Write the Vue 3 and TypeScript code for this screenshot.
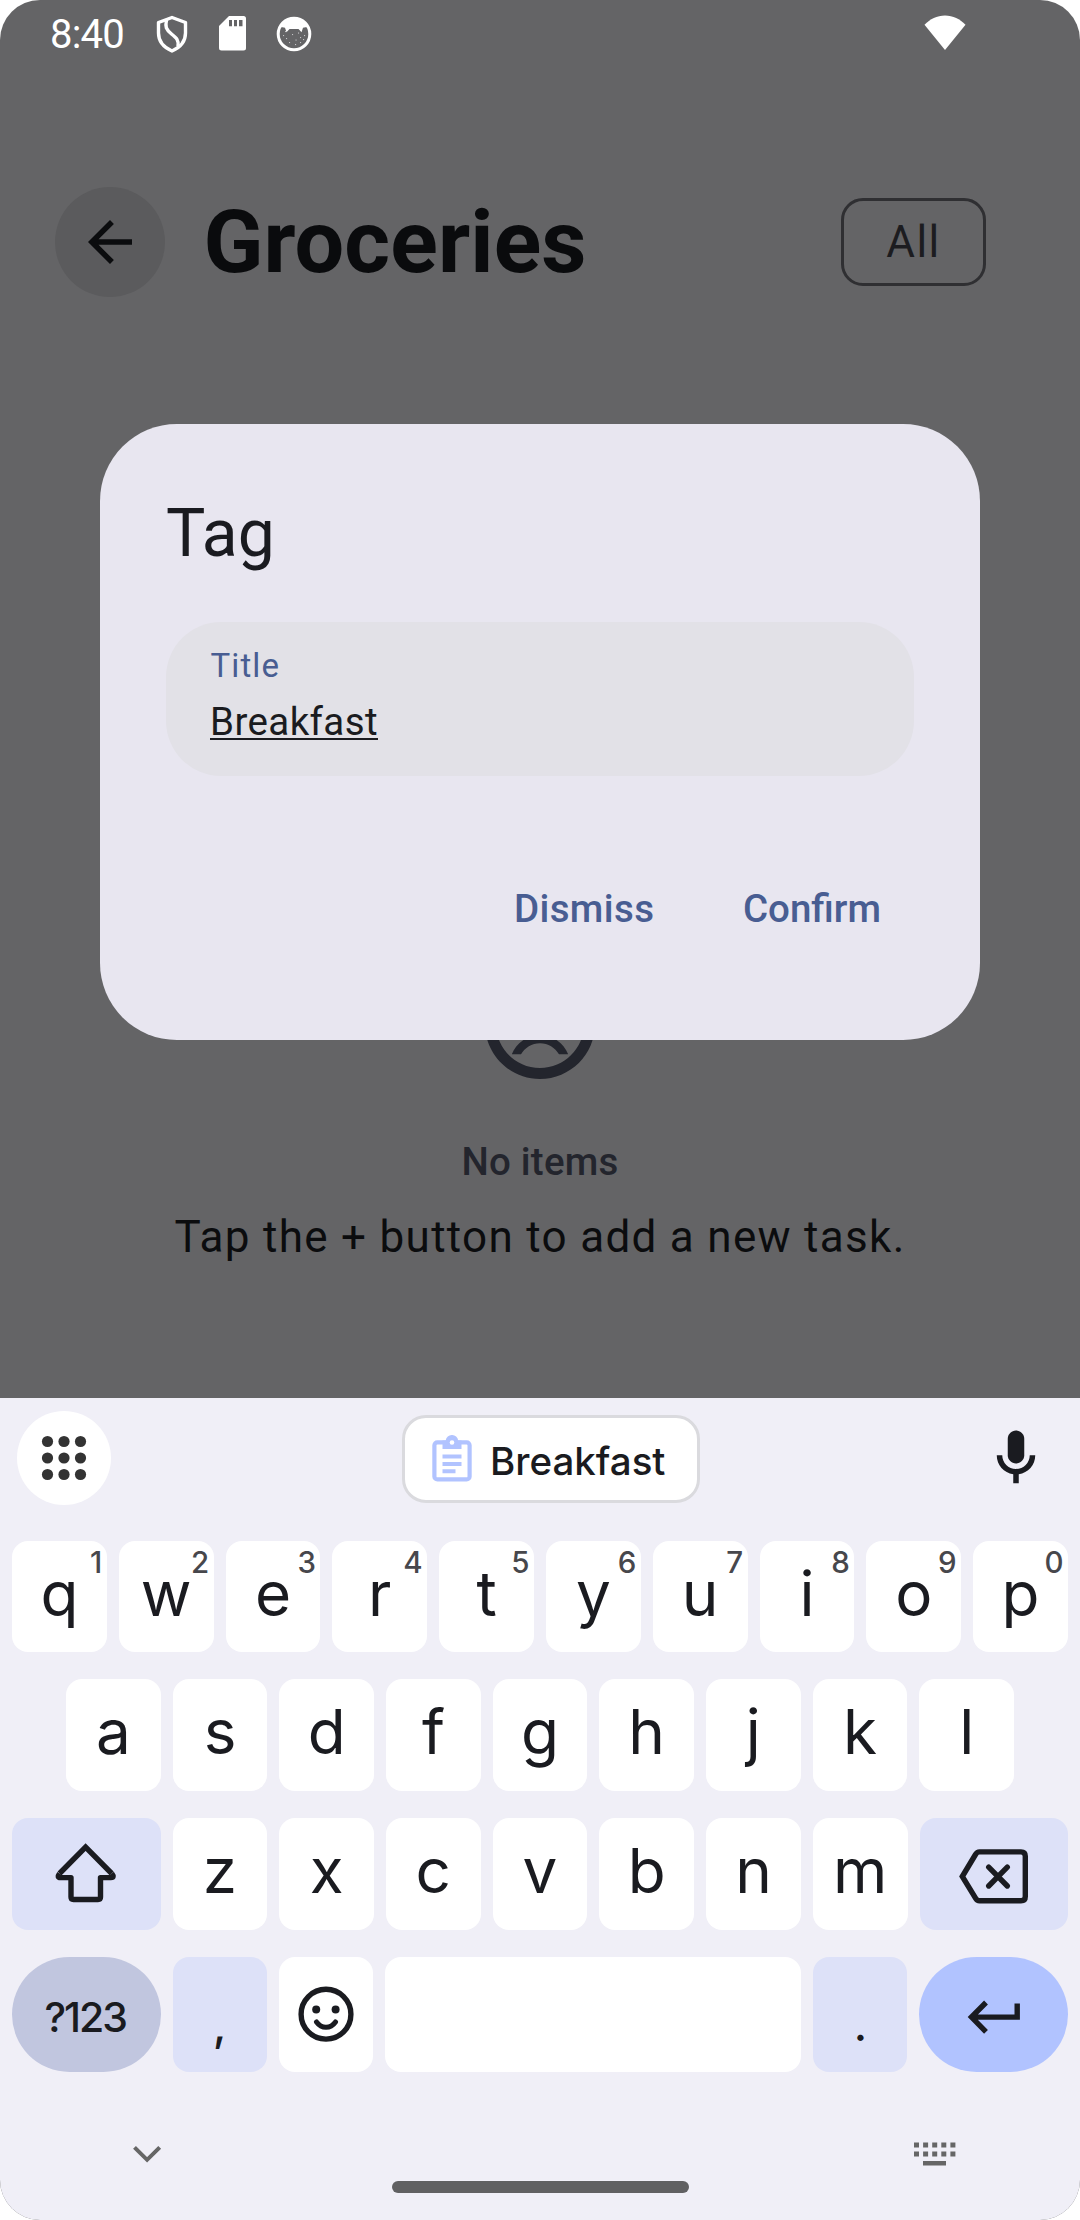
<script setup lang="ts">
interface LetterKey {
  label: string
  hint?: string
}

const topRow: LetterKey[] = [...'qwertyuiop'].map((label, i) => ({
  label,
  hint: String((i + 1) % 10),
}))
const middleRow: LetterKey[] = [...'asdfghjkl'].map((label) => ({ label }))
const bottomRow: LetterKey[] = [...'zxcvbnm'].map((label) => ({ label }))

const gridDots = [47.5, 64, 80.5].flatMap((x) => [1441.5, 1458, 1474.5].map((y) => ({ x, y })))
const switcherDots = [914, 923.1, 932.2, 941.3, 950.4].flatMap((x) => [2143, 2152].map((y) => ({ x, y })))
const freckles = [
  [285, 31], [298, 32.5], [283, 35], [286, 38], [292, 34],
  [295.5, 39.5], [300, 37], [304, 35], [289, 42], [295, 44], [300, 42], [303, 39],
]
</script>

<template>
  <div class="screen">
    <div class="status">
      <span class="clock">8:40</span>
      <svg class="shield" width="34" height="40" viewBox="154.500 13 34 40" fill="none" stroke="#fff" stroke-width="3.400" stroke-linejoin="round">
        <path d="M171.500 16.500 185 21.500V32c0 8-5.500 14.500-13.500 18-8-3.500-13.500-10-13.500-18V21.500Z" />
        <path d="M166 19c-1.500 7-.5 9.500 5 14 5 4 7.500 6 6.500 12.500" />
      </svg>
      <svg class="sd" width="27" height="35" viewBox="219 16 27 35">
        <path fill="#fff" d="M229 16h14.500a2.500 2.500 0 0 1 2.500 2.500v29.500a2.500 2.500 0 0 1-2.500 2.500H221.500a2.500 2.500 0 0 1-2.500-2.500V26Z" />
        <path fill="#646466" d="M229 20h3v6.300h-3zm5 0h3v6.300h-3zm5 0h3.500v6.300H239z" />
      </svg>
      <svg class="cat" width="36" height="36" viewBox="275.500 15.500 36 36">
        <circle cx="293.500" cy="33.500" r="15.800" fill="none" stroke="#fff" stroke-width="3" />
        <path fill="#fff" d="M279.500 26.500c2.500-6 8-9 14-9s11.500 3 14 9c-1.500.2-3.500.5-5 .8l-1.500 4.500-3-3.300h-9l-3 3.300-1.500-4.500c-1.500-.3-3.500-.6-5-.8Z" />
        <rect v-for="([x, y], i) in freckles" :key="i" :x="x - 0.5" :y="y - 0.5" width="1.100" height="1.100" fill="#c4c4c6" />
      </svg>
      <svg class="wifi" width="42" height="36" viewBox="923.500 14.500 42 36">
        <path fill="#fff" d="M924 24.300C929.500 18.500 936.500 15 944.500 15S959.500 18.500 965 24.300L944.500 49.500Z" />
      </svg>
    </div>

    <header class="header">
      <div class="back">
        <svg width="66" height="66" viewBox="0 0 24 24" fill="#0b0c0e"><path d="M20 11H7.830l5.590-5.590L12 4l-8 8 8 8 1.410-1.410L7.830 13H20v-2z" /></svg>
      </div>
      <h1>Groceries</h1>
      <div class="filter">All</div>
    </header>

    <main class="empty">
      <svg width="132" height="132" viewBox="0 0 24 24" fill="#23252d">
        <path d="M11.990 2C6.470 2 2 6.480 2 12s4.470 10 9.990 10C17.520 22 22 17.520 22 12S17.520 2 11.990 2zM12 20c-4.420 0-8-3.580-8-8s3.580-8 8-8 8 3.580 8 8-3.580 8-8 8z" />
        <path d="M12 14c-2.330 0-4.320 1.450-5.120 3.500h1.670c.69-1.190 1.970-2 3.450-2s2.750.81 3.450 2h1.670c-.8-2.050-2.790-3.500-5.120-3.500z" />
        <circle cx="8.500" cy="9.500" r="1.500" /><circle cx="15.500" cy="9.500" r="1.500" />
      </svg>
      <p class="empty-title">No items</p>
      <p class="empty-text">Tap the + button to add a new task.</p>
    </main>

    <section class="keyboard">
      <div class="strip">
        <div class="grid-button">
          <svg width="46" height="46" viewBox="41 1435 46 46" fill="#333">
            <circle v-for="(d, i) in gridDots" :key="i" :cx="d.x" :cy="d.y" r="5.600" />
          </svg>
        </div>
        <div class="paste">
          <svg width="40" height="48" viewBox="431.500 1435 40 48">
            <g fill="none" stroke="#b1c3ff" stroke-width="4.200">
              <rect x="433.900" y="1442.300" width="35.200" height="37.100" rx="3" />
            </g>
            <path fill="#b1c3ff" d="M442 1440.500h3.200a6.300 6.300 0 0 1 12.500 0h3.300v8.500H442zM442 1454.500h19v4h-19zm0 7.500h19v4h-19zm0 7.300h13v4h-13z" />
            <circle cx="451.500" cy="1442.500" r="2.300" fill="#fff" />
          </svg>
          <span>Breakfast</span>
        </div>
        <svg class="mic" width="66" height="66" viewBox="0 0 24 24" fill="#1a1b20">
          <path d="M12 14c1.660 0 3-1.340 3-3V5c0-1.660-1.340-3-3-3S9 3.340 9 5v6c0 1.660 1.340 3 3 3z" />
          <path d="M17 11c0 2.760-2.240 5-5 5s-5-2.240-5-5H5c0 3.530 2.610 6.430 6 6.920V21.200h2v-3.280c3.390-.49 6-3.390 6-6.920h-2z" />
        </svg>
      </div>

      <div class="rows">
        <div class="row first">
          <div v-for="k in topRow" :key="k.label" class="key">
            {{ k.label }}<span class="hint">{{ k.hint }}</span>
          </div>
        </div>
        <div class="row second">
          <div v-for="k in middleRow" :key="k.label" class="key">{{ k.label }}</div>
        </div>
        <div class="row">
          <div class="key wide tinted">
            <svg width="64" height="62" viewBox="54 1843 64 62" fill="none" stroke="#1a1b20" stroke-width="5.400" stroke-linejoin="round">
              <path stroke-linejoin="miter" d="M59.500 1873.500 85.600 1847 111.700 1873.500" />
              <path d="M59.500 1873.500q-3 4.100 1 4.100H71V1897q0 2.500 2.500 2.500H98q2.500 0 2.500-2.500V1877.600h10.400q4 0 .8-4.100" />
            </svg>
          </div>
          <div v-for="k in bottomRow" :key="k.label" class="key">{{ k.label }}</div>
          <div class="key wide tinted">
            <svg width="70" height="64" viewBox="958 1842 70 64" fill="none" stroke="#1a1b20" stroke-width="5.400" stroke-linecap="round">
              <path d="M961.300 1876.500 974.500 1854.500q1.500-2.600 4-2.600H1020q4.300 0 4.300 4.300v40.200q0 4.300-4.300 4.300H978.500q-2.500 0-4-2.600Z" />
              <path d="M987.700 1867.200l18.600 18.800M1006.300 1867.200l-18.600 18.800" />
            </svg>
          </div>
        </div>
        <div class="row last">
          <div class="key wide symbols">?123</div>
          <div class="key tinted punct">,</div>
          <div class="key">
            <svg width="58" height="58" viewBox="296 1985.500 58 58" fill="none" stroke="#1a1b20" stroke-linecap="round">
              <circle cx="325" cy="2013.700" r="24.900" stroke-width="5.400" />
              <path d="M315.500 2021.500c5 7 14 7 19 0" stroke-width="5" />
              <g fill="#1a1b20" stroke="none"><circle cx="315.200" cy="2009" r="4" /><circle cx="334.600" cy="2009" r="4" /></g>
            </svg>
          </div>
          <div class="key space"></div>
          <div class="key tinted punct">.</div>
          <div class="key wide enter">
            <svg width="54" height="36" viewBox="965 1998.500 54 36" fill="none" stroke="#1a1b20" stroke-width="5.400">
              <path d="M1015.200 2003V2016.600H970M984 2002 969.500 2016.600 984 2031.300" />
            </svg>
          </div>
        </div>
      </div>

      <div class="nav">
        <svg width="30" height="20" viewBox="131.500 2144 30 20" fill="none" stroke="#666" stroke-width="4"><path d="M134 2147.300l12.600 12.500 12.600-12.500" /></svg>
        <svg width="44" height="24" viewBox="913 2142.500 44 24" fill="#666">
          <rect v-for="(d, i) in switcherDots" :key="i" :x="d.x" :y="d.y" width="5" height="5" />
          <rect x="923" y="2161.500" width="23" height="4.500" />
        </svg>
      </div>
      <div class="pill"></div>
    </section>

    <div class="dialog">
      <h2>Tag</h2>
      <div class="field">
        <div class="label">Title</div>
        <div><span class="value">Breakfast</span></div>
      </div>
      <div class="actions">
        <span class="dismiss">Dismiss</span>
        <span class="confirm">Confirm</span>
      </div>
    </div>
  </div>
</template>

<style>
body {
  margin: 0;
  background: #fff;
}
</style>

<style scoped>
.screen {
  position: relative;
  display: flex;
  flex-direction: column;
  width: 1080px;
  height: 2220px;
  overflow: hidden;
  border-radius: 40px;
  background: #646466;
  font-family: Roboto, sans-serif;
}
svg { display: block; flex: none; }
h1, h2, p { margin: 0; }

.status {
  display: flex;
  align-items: center;
  height: 67px;
  padding-left: 50px;
}
.clock {
  width: 104.500px;
  padding-top: 2px;
  color: #fff;
  font-size: 40px;
  letter-spacing: -.8px;
  line-height: 48px;
}
.sd { margin-left: 30.500px; }
.cat { margin-left: 29.500px; }
.wifi { margin-left: 612px; margin-bottom: 2px; }

.header {
  display: flex;
  align-items: center;
  height: 110px;
  margin-top: 120px;
  padding: 0 94px 0 55px;
}
.back {
  display: flex;
  align-items: center;
  justify-content: center;
  width: 110px;
  height: 110px;
  border-radius: 50%;
  background: #5b5b5d;
}
h1 {
  margin-left: 38.500px;
  color: #0a0b0d;
  font-size: 88px;
  font-weight: 700;
  letter-spacing: .1px;
  line-height: 110px;
}
.filter {
  box-sizing: border-box;
  width: 145px;
  height: 88px;
  margin-left: auto;
  border: 3px solid #2f2f32;
  border-radius: 22px;
  color: #1c1c20;
  font-size: 44px;
  letter-spacing: 1.400px;
  line-height: 82px;
  text-align: center;
}

.empty {
  display: flex;
  flex-direction: column;
  align-items: center;
  height: 440px;
  margin-top: 661px;
}
.empty-title {
  margin-top: 44px;
  color: #23252d;
  font-size: 38.500px;
  font-weight: 500;
  letter-spacing: .2px;
  line-height: 56px;
}
.empty-text {
  margin-top: 14px;
  color: #0b0c0e;
  font-size: 44px;
  letter-spacing: 1.300px;
  line-height: 66px;
}

.keyboard {
  height: 822px;
  background: #f0eff7;
  color: #1a1b20;
  font-family: Inter, sans-serif;
}
.strip {
  display: flex;
  align-items: center;
  height: 120px;
  padding: 0 31px 0 17px;
}
.grid-button {
  display: flex;
  align-items: center;
  justify-content: center;
  width: 94px;
  height: 94px;
  border-radius: 50%;
  background: #fff;
}
.paste {
  box-sizing: border-box;
  display: flex;
  align-items: center;
  width: 298px;
  height: 88px;
  margin: 2px 0 0 291px;
  padding-left: 26.500px;
  border: 3px solid #dadade;
  border-radius: 24px;
  background: #fff;
  font-size: 38.500px;
  font-weight: 500;
}
.paste span { margin: 4px 0 0 18.500px; }
.mic { margin-left: auto; }

.rows {
  display: flex;
  flex-direction: column;
  gap: 27px;
  padding: 23px 12px 0;
}
.row { display: flex; gap: 12px; height: 112px; }
.first { height: 111px; }
.second { padding: 0 54px; }
.last { height: 115px; }
.key {
  position: relative;
  box-sizing: border-box;
  display: flex;
  flex: 1 1 0;
  align-items: center;
  justify-content: center;
  min-width: 0;
  padding-bottom: 6px;
  border-radius: 16px;
  background: #fff;
  font-size: 62px;
  line-height: 72px;
}
.key:has(svg) { padding-bottom: 0; }
.hint {
  position: absolute;
  top: 6px;
  right: 5px;
  color: #47474c;
  font-size: 29.500px;
  font-weight: 500;
  letter-spacing: -.5px;
  line-height: 30px;
}
.wide { flex: 0 0 148.500px; }
.tinted { background: #dde1f8; }
.space { flex: 0 0 416px; }
.punct { padding: 21px 0 0; font-size: 44px; font-weight: 500; }
.symbols {
  padding: 5px 2px 0 0;
  border-radius: 58px;
  background: #c1c6df;
  font-size: 41px;
  font-weight: 500;
  letter-spacing: -2px;
}
.enter { padding-top: 4px; border-radius: 58px; background: #b1c3ff; }

.nav {
  display: flex;
  align-items: center;
  justify-content: space-between;
  height: 36px;
  margin-top: 64px;
  padding: 0 123px 0 131.500px;
}
.pill {
  width: 297px;
  height: 12px;
  margin: 9px auto 0;
  border-radius: 6px;
  background: #606062;
}

.dialog {
  position: absolute;
  top: 424px;
  left: 100px;
  box-sizing: border-box;
  width: 880px;
  height: 616px;
  padding: 66px;
  border-radius: 77px;
  background: #e8e6f0;
}
h2 {
  color: #1a1b20;
  font-size: 66px;
  font-weight: 400;
  line-height: 88px;
}
.field {
  box-sizing: border-box;
  height: 154px;
  margin-top: 44px;
  padding: 22px 44px;
  border-radius: 55px;
  background: #e2e1e7;
}
.label {
  padding-left: .5px;
  color: #485d92;
  font-size: 33px;
  letter-spacing: 1.100px;
  line-height: 44px;
}
.value {
  display: inline-block;
  height: 50px;
  color: #1a1b20;
  font-size: 38.500px;
  letter-spacing: .4px;
  line-height: 68px;
  border-bottom: 2px solid #1a1b20;
}
.actions {
  display: flex;
  justify-content: flex-end;
  gap: 88.500px;
  margin-top: 105px;
  padding-right: 33px;
  color: #485d92;
  font-size: 38.500px;
  font-weight: 500;
  line-height: 56px;
}
.dismiss { letter-spacing: .4px; }
</style>
